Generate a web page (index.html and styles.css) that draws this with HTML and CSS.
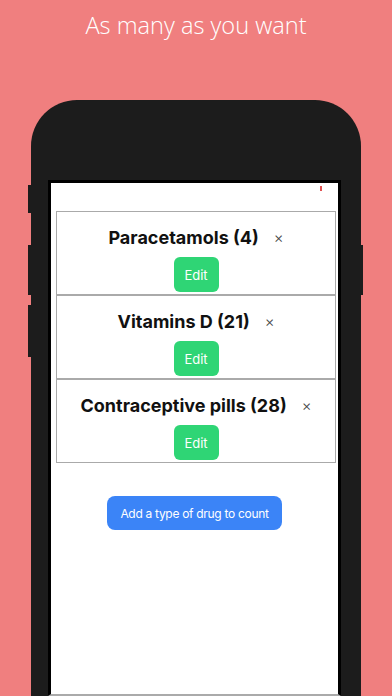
FILE: index.html
```html
<!DOCTYPE html>
<html lang="en">
<head>
  <meta charset="UTF-8">
  <meta name="viewport" content="width=device-width, initial-scale=1.0">
  <title>Drug counter</title>
  <link rel="stylesheet" href="styles.css">
</head>
<body>

  <header class="banner">
    <h1>As many as you want</h1>
  </header>

  <div class="phone">
    <span class="side-btn mute"></span>
    <span class="side-btn vol-up"></span>
    <span class="side-btn vol-down"></span>
    <span class="side-btn power"></span>

    <div class="screen">
      <span class="tick"></span>

      <div class="drug-list">
        <div class="drug-card">
          <div class="drug-row">
            <span class="drug-name">Paracetamols (4)</span>
            <span class="remove">&times;</span>
          </div>
          <button class="edit">Edit</button>
        </div>
        <div class="drug-card">
          <div class="drug-row">
            <span class="drug-name">Vitamins D (21)</span>
            <span class="remove">&times;</span>
          </div>
          <button class="edit">Edit</button>
        </div>
        <div class="drug-card">
          <div class="drug-row">
            <span class="drug-name">Contraceptive pills (28)</span>
            <span class="remove">&times;</span>
          </div>
          <button class="edit">Edit</button>
        </div>
      </div>

      <button class="add">Add a type of drug to count</button>
    </div>
  </div>

</body>
</html>
```

FILE: styles.css
```css
body {
  margin: 0;
  padding: 0;
  height: 696px;
  overflow: hidden;
  background-color: #f07f7f;
  font-family: Inter, "Noto Sans", sans-serif;
}

.banner {
  height: 100px;
  text-align: center;
}

.banner h1 {
  margin: 0;
  padding-top: 9px;
  font-family: "Open Sans", sans-serif;
  font-weight: 300;
  font-size: 23.6px;
  line-height: 32px;
  color: #fff;
}

.phone {
  position: relative;
  width: 330px;
  margin: 0 auto;
  box-sizing: border-box;
  padding: 80px 20px 0 17px;
  background: #1c1c1c;
  border-radius: 46px 46px 0 0;
}

.side-btn {
  position: absolute;
  width: 3px;
  background: #1c1c1c;
}

.mute { left: -3px; top: 85px; height: 28px; }
.vol-up { left: -3px; top: 145px; height: 50px; }
.vol-down { left: -3px; top: 205px; height: 52px; }
.power { right: -2px; top: 145px; height: 50px; width: 2px; }

.screen {
  position: relative;
  height: 483px;
  background: #fff;
  border: 3px solid #000;
  border-bottom: 2px solid #aaa;
  padding-top: 28px;
}

.tick {
  position: absolute;
  top: 3px;
  left: 269px;
  width: 2px;
  height: 5px;
  background: #e05050;
}

.drug-list {
  margin-left: 5px;
  width: 280px;
}

.drug-card {
  height: 84px;
  box-sizing: border-box;
  border: 1px solid #aaa;
  display: flex;
  flex-direction: column;
  align-items: center;
  padding-top: 14px;
}

.drug-row {
  display: flex;
  align-items: center;
  height: 22px;
}

.drug-name {
  font-weight: 700;
  font-size: 18px;
  color: #111;
}

.remove {
  margin-left: 15px;
  font-size: 15px;
  font-weight: 300;
  color: #444;
}

.edit {
  margin-top: 9px;
  width: 45px;
  height: 35px;
  border: none;
  border-radius: 6px;
  background: #2fd575;
  color: #fff;
  font-family: Inter, sans-serif;
  font-size: 13px;
}

.add {
  display: block;
  margin: 33px auto 0;
  height: 34px;
  padding: 0 13px;
  border: none;
  border-radius: 8px;
  background: #3b84f7;
  color: #fff;
  font-family: Inter, sans-serif;
  font-size: 12px;
  letter-spacing: -0.3px;
}
```
